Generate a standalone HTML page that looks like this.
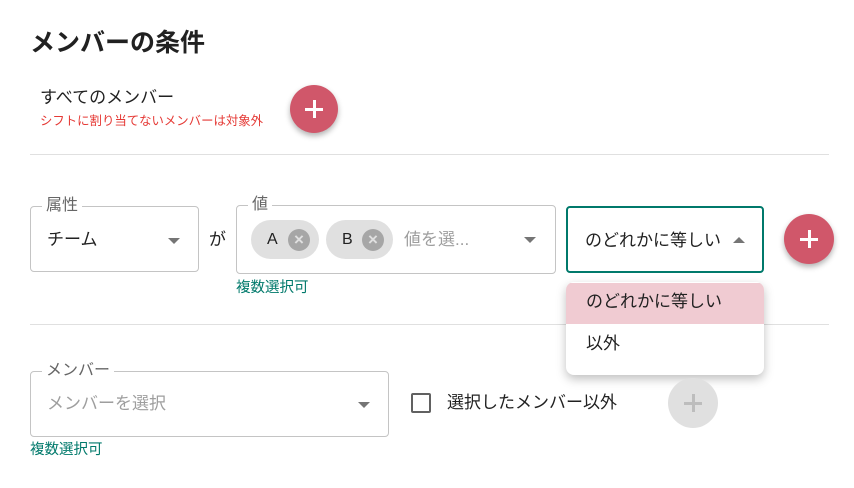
<!DOCTYPE html>
<html><head><meta charset="utf-8"><style>
*{box-sizing:border-box;margin:0;padding:0}
body{width:854px;height:488px;background:#fff;font-family:"Liberation Sans","Noto Sans CJK JP",sans-serif;color:#212121;position:relative;overflow:hidden}
.a{position:absolute;white-space:nowrap;line-height:24px}
.box{position:absolute;border:1px solid #c4c4c4;border-radius:4px}
.leg{position:absolute;top:-12px;background:#fff;padding:0 4px;font-size:16px;color:#666;line-height:22px}
.tri{position:absolute;width:0;height:0;border-left:6px solid transparent;border-right:6px solid transparent;border-top:6px solid #757575}
.fab{position:absolute;border-radius:50%;background:#d0576a;box-shadow:0 3px 6px rgba(0,0,0,.3);color:#fff}
.fab:before,.fab:after{content:"";position:absolute;background:#fff;left:50%;top:50%}
.fab:before{width:18px;height:3px;margin:-1.5px 0 0 -9px}
.fab:after{width:3px;height:18px;margin:-9px 0 0 -1.5px}
.fab.dis{background:#e0e0e0;box-shadow:none}
.fab.dis:before,.fab.dis:after{background:#bdbdbd}
.chip{position:absolute;top:14px;height:39px;border-radius:20px;background:#e0e0e0;font-size:16px;line-height:39px;padding-left:16px}
.x{position:absolute;right:9px;top:9px;width:22px;height:22px;border-radius:50%;background:#a6a6a6;color:#e0e0e0;font-size:17px;line-height:22px;text-align:center;font-weight:bold}
.green{color:#00796b;font-size:14.5px}
.t{font-size:17px}
</style></head><body>
<div class="a" style="left:30px;top:29px;font-size:25px;font-weight:bold;line-height:28px">メンバーの条件</div>
<div class="a t" style="left:40px;top:86px">すべてのメンバー</div>
<div class="a" style="left:40px;top:113px;font-size:12.4px;color:#e53935;line-height:16px">シフトに割り当てないメンバーは対象外</div>
<div class="fab" style="left:290px;top:85px;width:48px;height:48px"></div>
<div class="a" style="left:30px;top:154px;width:799px;height:1px;background:#e0e0e0"></div>

<div class="box" style="left:30px;top:206px;width:169px;height:66px">
<div class="leg" style="left:11px">属性</div>
<div class="a t" style="left:16px;top:21px">チーム</div>
<div class="tri" style="left:137px;top:31px"></div></div>
<div class="a t" style="left:209px;top:228px">が</div>

<div class="box" style="left:236px;top:205px;width:320px;height:69px">
<div class="leg" style="left:11px">値</div>
<div class="chip" style="left:14px;width:68px">A<span class="x">×</span></div>
<div class="chip" style="left:89px;width:67px">B<span class="x">×</span></div>
<div class="a t" style="left:167px;top:22px;color:#9e9e9e">値を選...</div>
<div class="tri" style="left:287px;top:31px"></div></div>
<div class="a green" style="left:236px;top:276px">複数選択可</div>

<div class="box" style="left:566px;top:206px;width:198px;height:67px;border:2px solid #00796b">
<div class="a t" style="left:17px;top:21px">のどれかに等しい</div>
<div class="tri" style="left:165px;top:29px;border-top:0;border-bottom:6px solid #757575"></div></div>
<div class="fab" style="left:784px;top:214px;width:50px;height:50px"></div>

<div class="a" style="left:30px;top:324px;width:799px;height:1px;background:#e0e0e0"></div>

<div class="a" style="left:566px;top:282px;width:198px;height:93px;background:#fff;border-radius:8px;box-shadow:0 4px 10px rgba(0,0,0,.25);overflow:hidden">
<div class="a" style="left:0;top:1px;width:198px;height:41px;background:#f0cbd2"></div>
<div class="a t" style="left:20px;top:8px">のどれかに等しい</div>
<div class="a t" style="left:20px;top:50px">以外</div></div>

<div class="box" style="left:30px;top:371px;width:359px;height:66px">
<div class="leg" style="left:11px">メンバー</div>
<div class="a t" style="left:16px;top:20px;color:#9e9e9e">メンバーを選択</div>
<div class="tri" style="left:327px;top:30px"></div></div>
<div class="a" style="left:411px;top:393px;width:20px;height:20px;border:2px solid #616161;border-radius:2px"></div>
<div class="a t" style="left:447px;top:391px">選択したメンバー以外</div>
<div class="fab dis" style="left:668px;top:378px;width:50px;height:50px"></div>
<div class="a green" style="left:30px;top:438px">複数選択可</div>
</body></html>
